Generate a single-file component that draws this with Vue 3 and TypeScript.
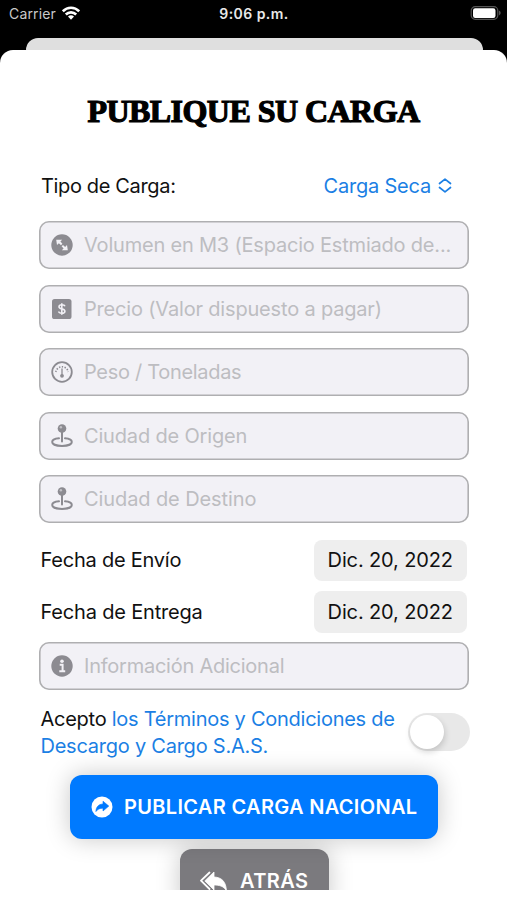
<script setup lang="ts">
import { ref } from 'vue'

type IconName = 'expand' | 'dollar' | 'gauge' | 'pin' | 'info'

interface Field {
  id: string
  icon: IconName
  placeholder: string
}

const fields: Field[] = [
  { id: 'volume', icon: 'expand', placeholder: 'Volumen en M3 (Espacio Estmiado de...' },
  { id: 'price', icon: 'dollar', placeholder: 'Precio (Valor dispuesto a pagar)' },
  { id: 'weight', icon: 'gauge', placeholder: 'Peso / Toneladas' },
  { id: 'origin', icon: 'pin', placeholder: 'Ciudad de Origen' },
  { id: 'target', icon: 'pin', placeholder: 'Ciudad de Destino' },
  { id: 'info', icon: 'info', placeholder: 'Información Adicional' },
]

const dates = [
  { id: 'ship', label: 'Fecha de Envío', value: 'Dic. 20, 2022' },
  { id: 'deliver', label: 'Fecha de Entrega', value: 'Dic. 20, 2022' },
]

const accepted = ref(false)
</script>

<template>
  <div class="screen">
    <header class="status">
      <div class="carrier">
        <span>Carrier</span>
        <svg class="wifi" viewBox="0 0 18 14" width="18" height="14">
          <g fill="none" stroke="#fff" stroke-width="2.6">
            <path d="M0.8 5.3C5.4 0.6 12.6 0.6 17.2 5.3" />
            <path d="M3.8 8.5C6.7 5.6 11.3 5.6 14.2 8.5" />
          </g>
          <path d="M6 10.5Q9 7.9 12 10.5L9 13.7Z" fill="#fff" />
        </svg>
      </div>
      <div class="time">9:06 p.m.</div>
      <div class="power">
        <svg viewBox="0 0 32 16" width="32" height="16">
          <rect x="1.2" y="1.7" width="26.6" height="12.6" rx="4" fill="none" stroke="#555" stroke-width="1.2" />
          <rect x="3" y="3.3" width="22.5" height="9.7" rx="2.2" fill="#fff" />
          <path d="M29 5.6Q30.7 6.6 30.7 8T29 10.4Z" fill="#555" />
        </svg>
      </div>
    </header>
    <div class="behind"></div>
    <main class="sheet">
      <div class="scroll">
        <h1 class="title"><span>PUBLIQUE SU CARGA</span></h1>
        <div class="type-row">
          <span class="t-type">Tipo de Carga:</span>
          <span class="picker">
            <span>Carga Seca</span>
            <svg viewBox="0 0 14 16" width="14" height="16">
              <path d="M1.5 5.5L7 1.2L12.5 5.5M1.5 9.5L7 13.8L12.5 9.5" fill="none" stroke="#1b7fe4" stroke-width="1.7" stroke-linecap="round" stroke-linejoin="round" />
            </svg>
          </span>
        </div>
        <div class="form">
          <template v-for="f in fields" :key="f.id">
            <div v-if="f.id === 'info'" class="dates">
              <div v-for="d in dates" :key="d.id" class="date-row">
                <span :class="'t-' + d.id">{{ d.label }}</span>
                <span class="pill"><span>{{ d.value }}</span></span>
              </div>
            </div>
            <div class="field">
              <svg class="icon" viewBox="0 0 24 26" width="24" height="26">
                <template v-if="f.icon === 'expand'">
                  <circle cx="12" cy="13" r="10.7" fill="#8c8b91" />
                  <path d="M6.200 7.800H12.200L10.400 9.600L12.400 11.800L11 13.200L8.900 11.200L7 13.100ZM17.800 18.300H11.800L13.600 16.500L11.600 14.300L13 12.900L15.100 14.900L17 13Z" fill="#f2f1f6" />
                </template>
                <template v-else-if="f.icon === 'dollar'">
                  <rect x="2" y="3" width="19.5" height="20" rx="2.6" fill="#8c8b91" />
                  <path d="M15 10.300Q14.500 8.800 11.800 8.800T9 10.800Q9 12.400 11.800 12.900T14.900 15.200Q14.900 17.200 11.900 17.200T8.700 15.500M11.800 7.300V18.700" fill="none" stroke="#f2f1f6" stroke-width="1.6" />
                </template>
                <template v-else-if="f.icon === 'gauge'">
                  <circle cx="12" cy="13" r="9.8" fill="none" stroke="#8c8b91" stroke-width="1.8" />
                  <path d="M5.800 13A6.300 6.300 0 0 1 18.200 13" fill="none" stroke="#8c8b91" stroke-width="1.6" stroke-dasharray="1.3 1.5" />
                  <path d="M12 10V16" stroke="#8c8b91" stroke-width="1.3" stroke-linecap="round" />
                  <circle cx="12" cy="16.8" r="1.9" fill="#8c8b91" />
                </template>
                <template v-else-if="f.icon === 'pin'">
                  <circle cx="12" cy="5.5" r="4.3" fill="#8c8b91" />
                  <circle cx="10.9" cy="4.3" r="1.2" fill="#c2c1c6" />
                  <path d="M12 9V18.500" stroke="#8c8b91" stroke-width="2" stroke-linecap="round" />
                  <path d="M9 15.300C4.500 15.700 2.200 17 2.200 18.900C2.200 21.200 6.200 22.900 12 22.900S21.800 21.200 21.800 18.900C21.800 17 19.500 15.700 15 15.300" fill="none" stroke="#8c8b91" stroke-width="2" stroke-linecap="round" />
                </template>
                <template v-else>
                  <circle cx="12" cy="13" r="10.7" fill="#8c8b91" />
                  <circle cx="12" cy="8.2" r="1.8" fill="#f2f1f6" />
                  <path d="M9.700 11.700H12.600V18M9.300 18.200H15.200" fill="none" stroke="#f2f1f6" stroke-width="2" />
                </template>
              </svg>
              <span class="hint" :class="'h-' + f.id">{{ f.placeholder }}</span>
            </div>
          </template>
        </div>
        <div class="terms">
          <p>
            <span class="line l1">Acepto <a>los Términos y Condiciones de</a></span>
            <span class="line l2"><a>Descargo y Cargo S.A.S.</a></span>
          </p>
          <button class="switch" :class="{ on: accepted }" role="switch" :aria-checked="accepted" @click="accepted = !accepted">
            <i class="knob"></i>
          </button>
        </div>
        <div class="actions">
          <button class="btn primary">
            <svg viewBox="0 0 22 22" width="22" height="22">
              <circle cx="11" cy="11" r="10.5" fill="#fff" />
              <path d="M12 5.200L17.800 10.100L12 15V12.200C8.800 12.200 6.700 13 4.900 15.600C5 11 7.500 8.200 12 8Z" fill="#007aff" stroke="#007aff" stroke-width=".6" stroke-linejoin="round" />
            </svg>
            <span>PUBLICAR CARGA NACIONAL</span>
          </button>
          <button class="btn secondary">
            <svg viewBox="0 0 28 24" width="28" height="24">
              <path d="M10.500 3.500L2 11.700L10.500 20" fill="none" stroke="#fff" stroke-width="1.8" stroke-linecap="round" stroke-linejoin="round" />
              <path d="M15 3V8C22.500 8.300 27 12.500 27.400 21.500C24.500 17.200 20.500 16 15 16V21L5.800 11.900Z" fill="#fff" stroke="#fff" stroke-width=".8" stroke-linejoin="round" />
            </svg>
            <span>ATRÁS</span>
          </button>
        </div>
      </div>
    </main>
  </div>
</template>

<style>
body {
  margin: 0;
  background: #000;
}
</style>

<style scoped>
.screen {
  width: 507px;
  height: 900px;
  overflow: hidden;
  display: flex;
  flex-direction: column;
  background: #000;
  color: #111;
  font: 400 20px/26px Inter, 'Liberation Sans', sans-serif;
}
.screen span {
  white-space: pre;
}
.status {
  height: 37.5px;
  flex: none;
  display: grid;
  grid-template-columns: 1fr auto 1fr;
  align-items: start;
  box-sizing: border-box;
  padding: 5px 5px 0 9px;
  color: #e9e9e9;
  font-size: 14px;
  line-height: 18px;
}
.carrier {
  display: flex;
  gap: 6px;
  color: #c9c9c9;
}
.carrier span {
  letter-spacing: 0.15px;
}
.wifi {
  margin-top: 1px;
}
.time {
  margin-right: 3px;
  font-weight: 600;
  letter-spacing: 0.46px;
}
.power {
  display: flex;
  justify-content: flex-end;
}
.behind {
  flex: none;
  height: 12.5px;
  margin: 0 24px 0 26px;
  border-radius: 12px 12px 0 0;
  background: #dfdfdf;
}
.sheet {
  flex: 1;
  min-height: 0;
  border-radius: 13px 13px 0 0;
  background: #fff;
}
.scroll {
  height: 840px;
  overflow: hidden;
  display: flex;
  flex-direction: column;
}
.title {
  flex: none;
  margin: 0;
  padding-top: 41px;
  height: 40px;
  text-align: center;
  color: #000;
  font: 700 32px/40px 'Liberation Serif', serif;
  letter-spacing: -0.54px;
  -webkit-text-stroke: 1.2px #000;
}
.type-row {
  flex: none;
  height: 26px;
  margin: 42px 55px 22px 41px;
  display: flex;
  justify-content: space-between;
}
.t-type {
  letter-spacing: -0.35px;
}
.picker {
  display: flex;
  align-items: center;
  gap: 7px;
  color: #1b7fe4;
  letter-spacing: -0.2px;
}
.form {
  flex: none;
  display: flex;
  flex-direction: column;
  gap: 15.5px;
  margin: 0 38.5px 0 39px;
}
.field {
  height: 48px;
  box-sizing: border-box;
  display: flex;
  align-items: center;
  gap: 10px;
  padding-left: 11px;
  border-radius: 10px;
  background: #f2f1f6;
  box-shadow: inset 0 0 0 1.6px #afafb1;
  color: #bdbdc1;
}
.icon {
  flex: none;
}
.h-volume {
  letter-spacing: -0.2px;
}
.h-info {
  letter-spacing: -0.24px;
}
.h-price {
  letter-spacing: -0.18px;
}
.h-weight {
  letter-spacing: -0.31px;
}
.h-origin {
  letter-spacing: -0.17px;
}
.h-target {
  letter-spacing: -0.1px;
}
.t-ship {
  letter-spacing: -0.23px;
}
.t-deliver {
  letter-spacing: -0.18px;
}
.dates {
  display: flex;
  flex-direction: column;
  gap: 10px;
  margin: 1px 1.5px -6px;
}
.date-row {
  height: 41.7px;
  display: flex;
  align-items: center;
  justify-content: space-between;
}
.pill {
  width: 153.5px;
  height: 41.7px;
  display: flex;
  align-items: center;
  justify-content: center;
  border-radius: 8px;
  background: #eee;
  letter-spacing: -0.13px;
}
.terms {
  flex: none;
  height: 54px;
  margin: 16px 37px 0 40.5px;
  display: flex;
  align-items: center;
  justify-content: space-between;
}
.terms p {
  margin: 0;
}
.line {
  display: block;
  line-height: 27px;
}
.l1 {
  letter-spacing: -0.26px;
}
.l2 {
  letter-spacing: -0.24px;
}
.terms a {
  color: #1b7fe4;
}
.switch {
  width: 62px;
  height: 38px;
  margin-bottom: 2px;
  padding: 2px;
  border: 0;
  border-radius: 19px;
  background: #e8e8e8;
}
.switch.on {
  background: #34c759;
}
.knob {
  display: block;
  width: 34px;
  height: 34px;
  border-radius: 50%;
  background: #fff;
  box-shadow: 1px 3px 6px rgba(0, 0, 0, 0.16);
}
.switch.on .knob {
  margin-left: 24px;
}
.actions {
  flex: none;
  display: flex;
  flex-direction: column;
  align-items: center;
  gap: 10px;
  padding: 15px 0 0 1px;
}
.btn {
  height: 64px;
  padding: 0;
  display: flex;
  align-items: center;
  justify-content: center;
  border: 0;
  border-radius: 12px;
  color: #fff;
  font: 600 20px/26px Inter, 'Liberation Sans', sans-serif;
  box-shadow: 0 0 24px rgba(0, 0, 0, 0.22);
}
.primary {
  z-index: 1;
  width: 367.5px;
  gap: 11.5px;
  background: #007aff;
  letter-spacing: 0.32px;
}
.secondary {
  width: 149px;
  gap: 12.5px;
  background: #7b7a7e;
  letter-spacing: 0.45px;
}
</style>
